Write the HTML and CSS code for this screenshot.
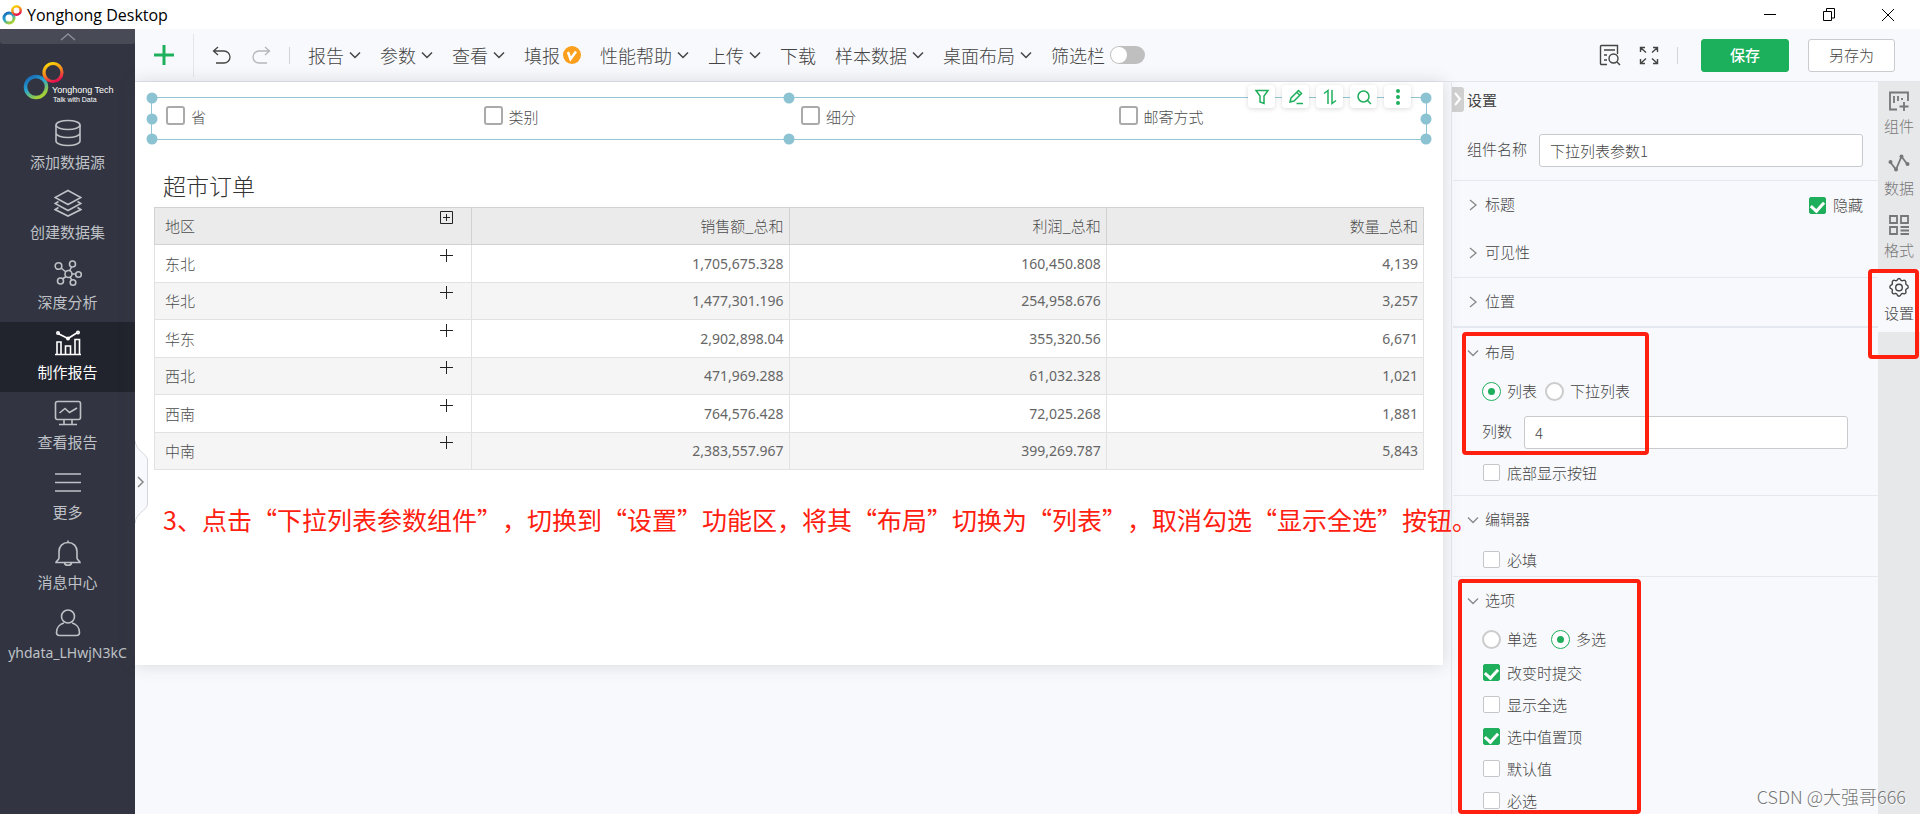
FILE: index.html
```html
<!DOCTYPE html>
<html lang="zh-CN">
<head>
<meta charset="utf-8">
<title>Yonghong Desktop</title>
<link rel="stylesheet" href="styles.css">
</head>
<body>
<svg class="defs" aria-hidden="true">
  <defs>
    <linearGradient id="cool" x1="0" y1="0" x2="0.6" y2="1"><stop offset="0" stop-color="#1560b4"/><stop offset="0.5" stop-color="#28a5cf"/><stop offset="1" stop-color="#a4cf35"/></linearGradient>
    <linearGradient id="warm" x1="0.2" y1="0" x2="0.6" y2="1"><stop offset="0" stop-color="#fcd808"/><stop offset="0.5" stop-color="#f58a1e"/><stop offset="1" stop-color="#e6104e"/></linearGradient>
    <symbol id="down" viewBox="0 0 12 12"><path d="M1 3.5l5 5 5-5"/></symbol>
    <symbol id="right" viewBox="0 0 12 12"><path d="M3 1l6 5-6 5"/></symbol>
    <symbol id="plus" viewBox="0 0 13 13"><path d="M6.5 0v13M0 6.5h13"/></symbol>
  </defs>
</svg>

<header class="titlebar">
  <svg class="app-icon" viewBox="0 0 22 22"><circle cx="8" cy="14" r="5" fill="none" stroke="url(#cool)" stroke-width="3"/><circle cx="15.5" cy="6.5" r="4.2" fill="none" stroke="url(#warm)" stroke-width="2.5"/></svg>
  <span class="app-name">Yonghong Desktop</span>
  <div class="window-controls">
    <button aria-label="最小化"><svg viewBox="0 0 14 14"><path d="M1 6.5h12"/></svg></button>
    <button aria-label="还原"><svg viewBox="0 0 14 14"><path d="M1.5 3.5h8v9h-8zM4.5 3V.5h8v9.5H10"/></svg></button>
    <button aria-label="关闭"><svg viewBox="0 0 14 14"><path d="M1 1l12 12M13 1L1 13"/></svg></button>
  </div>
</header>

<div class="app">
  <nav class="sidebar">
    <button class="collapse" aria-label="收起"><svg viewBox="0 0 16 8"><path d="M1 7l7-6 7 6"/></svg></button>
    <svg class="logo" viewBox="0 0 135 68">
      <circle cx="36" cy="43" r="10.5" fill="none" stroke="url(#cool)" stroke-width="3.5"/>
      <circle cx="53" cy="28.500" r="9" fill="none" stroke="url(#warm)" stroke-width="3.2"/>
      <text x="52" y="49" class="logo-name">Yonghong Tech</text>
      <text x="53" y="58" class="logo-tag">Talk with Data</text>
    </svg>
    <a href="#" class="nav-item"><svg viewBox="0 0 28 28"><ellipse cx="14" cy="6" rx="12" ry="4.5"/><path d="M2 6v16c0 2.5 5.4 4.5 12 4.5s12-2 12-4.5V6M2 14c0 2.5 5.4 4.5 12 4.5s12-2 12-4.5"/></svg><span>添加数据源</span></a>
    <a href="#" class="nav-item"><svg viewBox="0 0 28 28"><path d="M14 1.5l13 7-13 7-13-7zM4.500 12.500L1 14.500l13 7 13-7-3.500-2M4.500 18.500L1 20.500l13 6.500 13-6.500-3.500-2"/></svg><span>创建数据集</span></a>
    <a href="#" class="nav-item"><svg viewBox="0 0 28 28"><circle cx="14.5" cy="15" r="3.5"/><circle cx="4.5" cy="7" r="3.3"/><circle cx="18.5" cy="5" r="3"/><circle cx="24.5" cy="15.5" r="2.8"/><circle cx="6.5" cy="22" r="3"/><circle cx="19" cy="23.5" r="2.8"/><path d="M7 9l5 4M17.500 8l-2 4M18 15h4M12 17.500l-3.500 2.500M16 18l1.800 3"/></svg><span>深度分析</span></a>
    <a href="#" class="nav-item active"><svg viewBox="0 0 28 28"><path d="M1 25.500h26M3 25V13h4v12M11.500 25v-8h5v8M21 25V10.500h4.500V25M4 4.500l10 5 9.500-6"/><circle cx="4" cy="4" r="1.2"/><circle cx="14" cy="9.5" r="1.2"/><circle cx="24" cy="3.5" r="1.2"/></svg><span>制作报告</span></a>
    <a href="#" class="nav-item"><svg viewBox="0 0 28 28"><rect x="1.5" y="2.5" width="25" height="18" rx="2"/><path d="M5.500 14l5.500-4.500 4.500 4L23 9M10 21v4M18 21v4M5 25.500h18"/></svg><span>查看报告</span></a>
    <a href="#" class="nav-item"><svg viewBox="0 0 28 28"><path d="M1 5h26M1 13.500h26M1 22h26"/></svg><span>更多</span></a>
    <a href="#" class="nav-item"><svg viewBox="0 0 28 28"><path d="M14 1.500v2M14 3.500c-5.500 0-9 4-9 9v6.500c0 2-3 3-3 4.500h24c0-1.500-3-2.500-3-4.500v-6.500c0-5-3.500-9-9-9zM10.500 24c.5 3 6.500 3 7 0"/></svg><span>消息中心</span></a>
    <a href="#" class="nav-item"><svg viewBox="0 0 28 28"><circle cx="14" cy="7.5" r="6.5"/><path d="M10 14c-4 1-7.500 4.500-7.500 9.500 0 2 .8 3 3 3h17c2.200 0 3-1 3-3 0-5-3.500-8.500-7.500-9.500"/></svg><span class="user">yhdata_LHwjN3kC</span></a>
  </nav>

  <div class="content">
    <div class="toolbar">
      <button class="add" aria-label="新建"><svg viewBox="0 0 20 20"><path d="M10 0v20M0 10h20"/></svg></button>
      <span class="rule tall"></span>
      <div class="history">
        <button aria-label="撤销"><svg viewBox="0 0 20 18"><path d="M6 1L1.500 5 6 9M1.500 5H12a6 6 0 0 1 0 12H4"/></svg></button>
        <button class="faded" aria-label="重做"><svg viewBox="0 0 20 18"><path d="M14 1l4.500 4L14 9M18.500 5H8a6 6 0 0 0 0 12h8"/></svg></button>
      </div>
      <span class="rule"></span>
      <div class="menus">
        <button>报告<svg><use href="#down"/></svg></button>
        <button>参数<svg><use href="#down"/></svg></button>
        <button>查看<svg><use href="#down"/></svg></button>
        <button class="vip">填报<svg class="badge" viewBox="0 0 18 18"><circle cx="9" cy="9" r="9"/><path d="M5 6l2.500 7L13 5.500"/></svg></button>
        <button>性能帮助<svg><use href="#down"/></svg></button>
        <button>上传<svg><use href="#down"/></svg></button>
        <button>下载</button>
        <button>样本数据<svg><use href="#down"/></svg></button>
        <button>桌面布局<svg><use href="#down"/></svg></button>
        <label class="switch">筛选栏<input type="checkbox" role="switch"></label>
      </div>
      <div class="toolbar-end">
        <button class="tool" aria-label="预览"><svg viewBox="0 0 22 22"><path d="M8 20.500H2.500a1 1 0 0 1-1-1v-17a1 1 0 0 1 1-1h16V10M5 6h11M5 11h3M5 16h3"/><circle cx="14.5" cy="14.5" r="4.5"/><path d="M18 18l3 3"/></svg></button>
        <button class="tool" aria-label="全屏"><svg viewBox="0 0 22 22"><path d="M2.500 8V3.500H7M3 4l5 4.500M15 3.500h4.500V8M19 4l-5 4.500M2.500 15v4.500H7M3 19l5-4.500M15 19.500h4.500V15M19 19l-5-4.500"/></svg></button>
        <span class="rule"></span>
        <button class="btn primary">保存</button>
        <button class="btn">另存为</button>
      </div>
    </div>

    <div class="workspace">
      <main class="stage">
        <div class="canvas">
          <div class="params">
            <label><input type="checkbox">省</label>
            <label><input type="checkbox">类别</label>
            <label><input type="checkbox">细分</label>
            <label><input type="checkbox">邮寄方式</label>
            <i class="handle t l"></i><i class="handle m l"></i><i class="handle b l"></i>
            <i class="handle t c"></i><i class="handle b c"></i>
            <i class="handle t r"></i><i class="handle m r"></i><i class="handle b r"></i>
            <div class="float-tools">
              <button aria-label="筛选"><svg viewBox="0 0 16 16"><path d="M2 1.500h12L10 7v7.500L6 13V7z"/></svg></button>
              <button aria-label="编辑"><svg viewBox="0 0 16 16"><path d="M2 13l1-4 7.500-7.500 3 3L6 12zM9 3.500l3 3M8.500 14.500H15"/></svg></button>
              <button aria-label="排序"><svg viewBox="0 0 16 16"><path d="M2 4.500L6 1.500V15M10 1v13.500l4-3"/></svg></button>
              <button aria-label="搜索"><svg viewBox="0 0 16 16"><circle cx="7.5" cy="7.5" r="5.5"/><path d="M11.500 11.500L15 15"/></svg></button>
              <button aria-label="更多"><svg viewBox="0 0 16 16"><path class="dots" d="M8 2v0M8 8v0M8 14v0"/></svg></button>
            </div>
          </div>
          <h1>超市订单</h1>
          <table>
            <thead><tr><th><div class="dim">地区<button aria-label="展开全部"><svg viewBox="0 0 13 13"><path d="M.5.5h12v12H.5zM6.500 3v7M3 6.500h7"/></svg></button></div></th><th>销售额_总和</th><th>利润_总和</th><th>数量_总和</th></tr></thead>
            <tbody>
              <tr><td><div class="dim">东北<button aria-label="展开"><svg><use href="#plus"/></svg></button></div></td><td>1,705,675.328</td><td>160,450.808</td><td>4,139</td></tr>
              <tr><td><div class="dim">华北<button aria-label="展开"><svg><use href="#plus"/></svg></button></div></td><td>1,477,301.196</td><td>254,958.676</td><td>3,257</td></tr>
              <tr><td><div class="dim">华东<button aria-label="展开"><svg><use href="#plus"/></svg></button></div></td><td>2,902,898.04</td><td>355,320.56</td><td>6,671</td></tr>
              <tr><td><div class="dim">西北<button aria-label="展开"><svg><use href="#plus"/></svg></button></div></td><td>471,969.288</td><td>61,032.328</td><td>1,021</td></tr>
              <tr><td><div class="dim">西南<button aria-label="展开"><svg><use href="#plus"/></svg></button></div></td><td>764,576.428</td><td>72,025.268</td><td>1,881</td></tr>
              <tr><td><div class="dim">中南<button aria-label="展开"><svg><use href="#plus"/></svg></button></div></td><td>2,383,557.967</td><td>399,269.787</td><td>5,843</td></tr>
            </tbody>
          </table>
          <p class="note">3、点击“下拉列表参数组件”，切换到“设置”功能区，将其“布局”切换为“列表”，取消勾选“显示全选”按钮。</p>
        </div>
        <button class="expander" aria-label="展开"><svg viewBox="0 0 14 84"><path class="tab" d="M0 .5C1 12 12 13 12.500 20v44C12 71 1 72 0 83.500"/><path class="arrow" d="M3 37l5 5-5 5"/></svg></button>
      </main>

      <aside class="panel">
        <button class="panel-toggle" aria-label="收起"><svg viewBox="0 0 12 25"><path d="M3 6l5 6-5 6"/></svg></button>
        <section class="intro">
          <h2>设置</h2>
          <div class="field"><label for="name">组件名称</label><input id="name" type="text" value="下拉列表参数1"></div>
        </section>
        <section>
          <div class="head"><svg><use href="#right"/></svg><h3>标题</h3><label class="opt"><input type="checkbox" checked>隐藏</label></div>
          <div class="head"><svg><use href="#right"/></svg><h3>可见性</h3></div>
        </section>
        <section class="heavy">
          <div class="head"><svg><use href="#right"/></svg><h3>位置</h3></div>
        </section>
        <section class="layout">
          <div class="head"><svg><use href="#down"/></svg><h3>布局</h3></div>
          <div class="radios"><label class="opt"><input type="radio" name="layout" checked>列表</label><label class="opt"><input type="radio" name="layout">下拉列表</label></div>
          <div class="field nested"><label for="cols">列数</label><input id="cols" type="text" value="4"></div>
          <div class="line"><label class="opt"><input type="checkbox">底部显示按钮</label></div>
        </section>
        <section>
          <div class="head"><svg><use href="#down"/></svg><h3>编辑器</h3></div>
          <div class="line"><label class="opt"><input type="checkbox">必填</label></div>
        </section>
        <section class="choices">
          <div class="head"><svg><use href="#down"/></svg><h3>选项</h3></div>
          <div class="radios wide"><label class="opt"><input type="radio" name="mode">单选</label><label class="opt"><input type="radio" name="mode" checked>多选</label></div>
          <div class="line"><label class="opt"><input type="checkbox" checked>改变时提交</label></div>
          <div class="line"><label class="opt"><input type="checkbox">显示全选</label></div>
          <div class="line"><label class="opt"><input type="checkbox" checked>选中值置顶</label></div>
          <div class="line"><label class="opt"><input type="checkbox">默认值</label></div>
          <div class="line"><label class="opt"><input type="checkbox">必选</label></div>
        </section>
        <i class="mark mark-layout"></i>
        <i class="mark mark-options"></i>
      </aside>

      <nav class="rail">
        <a href="#"><svg viewBox="0 0 22 22"><path d="M9 19.500H2V2.500h18V11M6 6v7M10 6v5M14 8v2M16 12v9M11.500 16.500h9"/></svg>组件</a>
        <a href="#"><svg viewBox="0 0 22 22"><path d="M2.500 10.500l5.500 7 5.500-13 6 8"/><g class="solid"><circle cx="2.5" cy="10" r="2"/><circle cx="8" cy="17.5" r="2"/><circle cx="13.5" cy="4.5" r="2"/><circle cx="19.5" cy="12" r="2"/></g></svg>数据</a>
        <a href="#"><svg viewBox="0 0 22 22"><path d="M2 2h7v7H2zM13 2h7v7h-7zM2 13h7v7H2zM12.500 13H21M12.500 16.500H21M12.500 20H21"/></svg>格式</a>
        <a href="#" class="active"><svg viewBox="0 0 22 22"><path d="M9.500 2.500a1.600 1.600 0 0 1 3 0c.4 1.200 1.600 1.600 2.600 1 1.500-.8 3.200.6 2.700 2.200-.4 1.200.2 2 1.300 2.500 1.500.7 1.500 2.700 0 3.400-1.200.5-1.700 1.500-1.200 2.700.6 1.600-.8 3-2.400 2.400-1.200-.5-2.300 0-2.700 1.200-.6 1.700-2.900 1.700-3.500 0-.4-1.200-1.500-1.700-2.700-1.200-1.600.6-3-.8-2.400-2.400.5-1.200 0-2.200-1.200-2.700-1.500-.7-1.500-2.700 0-3.400 1.100-.5 1.700-1.300 1.300-2.500-.5-1.600 1.200-3 2.700-2.200 1 .6 2.100.2 2.500-1z"/><circle cx="11" cy="10.5" r="3.3"/></svg>设置</a>
        <i class="mark mark-tab"></i>
      </nav>
    </div>
  </div>
</div>
<div class="watermark">CSDN @大强哥666</div>
</body>
</html>
```
FILE: styles.css
```css
* { box-sizing: border-box; }
body {
  margin: 0;
  height: 100vh;
  display: flex;
  flex-direction: column;
  overflow: hidden;
  background: #f8f9fc;
  color: #4d4d4d;
  font: 300 15px/20px "Noto Sans CJK SC", "Noto Sans", sans-serif;
}
button, input { font: inherit; color: inherit; margin: 0; }
button { padding: 0; border: 0; background: none; }
a { color: inherit; text-decoration: none; }
h1, h2, h3, p { margin: 0; font-size: 15px; font-weight: 300; }
svg { display: block; flex: none; fill: none; stroke: currentColor; }
.defs { position: absolute; width: 0; height: 0; }

/* window title bar */
.titlebar { display: flex; align-items: center; height: 29px; background: #fff; color: #000; flex: none; }
.app-icon { width: 22px; height: 22px; margin-left: 1px; }
.app-name { margin-left: 4px; font: 400 16px/20px "Open Sans", "Noto Sans", sans-serif; }
.window-controls { display: flex; margin: 0 25px 0 auto; gap: 45px; }
.window-controls svg { width: 14px; height: 14px; }

.app { flex: 1; display: flex; min-height: 0; }

/* left navigation */
.sidebar { width: 135px; flex: none; background: #323541; color: #bfc1c6; }
.collapse { display: flex; align-items: center; justify-content: center; width: 100%; height: 15px; background: #484b56; color: #8c8e96; border-radius: 0 0 3px 3px; }
.collapse svg { width: 16px; height: 8px; stroke-width: 1.5; }
.logo { width: 100%; height: 68px; }
.logo text { stroke: none; fill: #fff; font-family: "Liberation Sans", Arial, sans-serif; }
.logo-name { font-size: 9px; font-weight: 400; }
.logo-tag { font-size: 7px; font-weight: 400; }
.nav-item { display: flex; flex-direction: column; align-items: center; gap: 5px; height: 70px; padding-top: 7px; font-weight: 400; }
.nav-item svg { width: 28px; height: 28px; stroke-width: 1.6; }
.nav-item span { font-family: "Noto Sans CJK SC", sans-serif; font-size: 15px; }
.nav-item .user { font-family: "Noto Sans", sans-serif; font-size: 14px; line-height: 22px; }
.nav-item.active { background: #22242d; color: #fff; }

/* top toolbar */
.content { flex: 1; display: flex; flex-direction: column; min-width: 0; }
.toolbar { display: flex; align-items: center; height: 53px; flex: none; border-bottom: 1px solid #e4e6ee; color: #444; }
.add { margin: 0 19px 0 19px; color: #1fb05c; }
.add svg { width: 20px; height: 20px; stroke-width: 3; }
.rule { width: 1px; height: 17px; background: #d2d4d9; }
.rule.tall { height: 43px; background: #e4e6ec; }
.history { display: flex; gap: 19px; margin: 0 18px; }
.history svg { width: 20px; height: 18px; stroke-width: 1.3; }
.faded { color: #b4b6ba; }
.menus { display: flex; gap: 19px; margin-left: 18px; font-size: 18px; line-height: 24px; color: #444; }
.menus button, .switch { display: flex; align-items: center; gap: 5px; white-space: nowrap; }
.menus svg { width: 12px; height: 12px; stroke-width: 1.5; }
.menus .badge { width: 18px; height: 18px; fill: #fb9f1c; stroke: none; }
.menus .badge path { fill: none; stroke: #fff; stroke-width: 2.5; }
.menus .vip { gap: 3px; }
.switch input { appearance: none; width: 35px; height: 18px; padding: 1px; border-radius: 9px; background: #bfbfbf; }
.switch input::before { content: ""; display: block; width: 16px; height: 16px; border-radius: 50%; background: #fff; }
.toolbar-end { display: flex; align-items: center; margin: 0 25px 0 auto; }
.tool { margin-right: 17px; }
.tool svg { width: 22px; height: 22px; stroke-width: 1.4; }
.btn { height: 33px; width: 87px; margin-left: 19px; border: 1px solid #c9cbcf; border-radius: 3px; background: #fff; }
.btn.primary { margin-left: 23px; width: 88px; border-color: #1caf5c; background: #1caf5c; color: #fff; font-weight: 500; }

/* report canvas */
.workspace { flex: 1; display: flex; min-height: 0; }
.stage { flex: 1; min-width: 0; position: relative; z-index: 1; padding-right: 8px; }
.canvas { padding: 15px 16px 128px 16px; background: #fff; box-shadow: 0 0 16px rgba(60, 64, 80, 0.18); }
.params { position: relative; display: grid; grid-template-columns: repeat(4, 1fr); height: 43px; padding-right: 4px; margin-bottom: 31px; border: 1px solid #93c6d5; }
.params > label { display: flex; align-items: flex-start; gap: 6px; padding: 8px 0 0 14px; line-height: 22px; }
.params input { appearance: none; width: 19px; height: 19px; border: 2px solid #aaa; border-radius: 3px; background: #fff; }
.handle { position: absolute; width: 11px; height: 11px; border-radius: 50%; background: #8cc3d3; transform: translate(-50%, -50%); }
.t { top: 0; } .m { top: 50%; } .b { top: 100%; }
.l { left: 0; } .c { left: 50%; } .r { left: 100%; }
.float-tools { position: absolute; right: 15px; top: -13px; display: flex; gap: 7px; color: #1fae5c; }
.float-tools button { display: flex; align-items: center; justify-content: center; width: 27px; height: 23px; border-radius: 4px; background: #fff; box-shadow: 0 1px 5px rgba(0, 0, 0, 0.15); }
.float-tools svg { width: 16px; height: 16px; stroke-width: 1.5; }
.dots { stroke-width: 4; stroke-linecap: round; }
.canvas h1 { margin: 0 0 8px 12px; font-size: 23px; line-height: 28px; color: #333; }
table { width: calc(100% - 6px); margin-left: 3px; table-layout: fixed; border-collapse: collapse; }
th, td { height: 38px; padding: 0 5px; border: 1px solid #e2e2e2; text-align: right; font-weight: 300; }
td { font-family: "Noto Sans", "Noto Sans CJK SC", sans-serif; font-size: 14px; font-weight: 400; color: #666; }
th { height: 36px; background: #ebebeb; border-color: #d2d2d2; }
tbody tr:nth-child(even) td { height: 37px; background: #f5f5f5; }
.dim { display: flex; justify-content: space-between; align-items: center; height: 36px; padding: 0 13px 0 5px; font: 300 15px/20px "Noto Sans CJK SC", sans-serif; color: #4d4d4d; }
.dim button { align-self: flex-start; margin-top: 3px; color: #222; }
.dim svg { width: 13px; height: 13px; stroke-width: 1; }
.note { margin: 31px 0 0 12px; font: 400 25px/36px "Noto Sans CJK SC", sans-serif; text-spacing-trim: space-all; color: #ff2010; white-space: nowrap; }
.expander { position: absolute; left: 0; top: 358px; }
.expander svg { width: 14px; height: 84px; }
.tab { fill: #f8f9fc; stroke: #d3d6dd; }
.arrow { stroke: #888; stroke-width: 1.5; }

/* settings panel */
.panel { position: relative; width: 427px; flex: none; background: #f8f9fc; border-left: 1px solid #e6e8ee; color: #444; }
.panel section { margin-left: 1px; border-bottom: 1px solid #e6e8ef; }
.panel .heavy { border-bottom-width: 2px; }
.panel .choices { border-bottom: 0; }
.panel-toggle { position: absolute; left: 0; top: 5px; background: #d0d0d0; border-radius: 0 3px 3px 0; color: #fff; }
.panel-toggle svg { width: 12px; height: 25px; stroke-width: 2; }
h2 { padding: 8px 0 10px 14px; font-weight: 400; }
.field { display: flex; align-items: center; gap: 12px; height: 60px; padding: 0 15px 0 14px; }
.field label { padding-bottom: 3px; }
.field.nested { height: 57px; padding: 0 30px 0 29px; gap: 12px; }
.field input { flex: 1; min-width: 0; height: 33px; padding: 0 10px; border: 1px solid #c8cacd; border-radius: 3px; background: #fff; }
.head { display: flex; align-items: center; height: 48px; padding: 0 15px 0 14px; }
.head svg { width: 12px; height: 12px; margin-right: 6px; stroke: #888; stroke-width: 1.3; }
.head h3 { padding-bottom: 2px; }
.head .opt { margin-left: auto; }
.layout { padding-bottom: 10px; }
.layout .head { height: 50px; }
.opt { display: flex; align-items: center; gap: 7px; }
.line { display: flex; align-items: center; height: 32px; padding: 0 0 1px 30px; }
.layout .line { height: 24px; }
.radios { display: flex; gap: 8px; height: 26px; padding-left: 29px; }
.radios.wide { gap: 14px; height: 28px; margin-bottom: 4px; }
.radios .opt { gap: 6px; }
.opt input { appearance: none; flex: none; width: 17px; height: 17px; border: 1px solid #c4c6ca; border-radius: 2px; background: #fff; }
.opt input[type="radio"] { display: flex; align-items: center; justify-content: center; width: 19px; height: 19px; border: 2px solid #ccc; border-radius: 50%; }
.opt input[type="radio"]:checked { border: 1px solid #1fae5c; }
.opt input[type="radio"]:checked::before { content: ""; width: 7px; height: 7px; border-radius: 50%; background: #1fae5c; }
.opt input[type="checkbox"]:checked { display: flex; justify-content: center; border-color: #1fae5c; background: #1fae5c; }
.opt input[type="checkbox"]:checked::before { content: ""; width: 6px; height: 10px; margin-top: 1px; border: solid #fff; border-width: 0 3px 3px 0; transform: rotate(42deg); }

/* right tab rail */
.rail { position: relative; width: 42px; flex: none; padding-top: 1px; background: #e7e8ea; color: #777; }
.rail a { display: flex; flex-direction: column; align-items: center; gap: 4px; height: 62px; padding-top: 7px; white-space: nowrap; }
.rail svg { width: 22px; height: 22px; stroke-width: 1.8; }
.rail .active { height: 63px; padding-top: 8px; background: #f8f9fc; color: #444; }
.rail .active svg { stroke-width: 1.4; }
.solid { fill: currentColor; stroke: none; }

/* red callout frames drawn over the panel */
.mark { position: absolute; border: 4px solid #ff2010; border-radius: 4px; pointer-events: none; }
.mark-layout { left: 10px; top: 250px; width: 187px; height: 123px; }
.mark-options { left: 6px; top: 497px; width: 183px; height: 235px; }
.mark-tab { left: -10px; top: 187px; width: 51px; height: 90px; }
.watermark { position: absolute; right: 14px; bottom: 5px; z-index: 2; font-size: 18px; line-height: 26px; color: #777; text-shadow: 1px 1px 1px #fff; }
```
